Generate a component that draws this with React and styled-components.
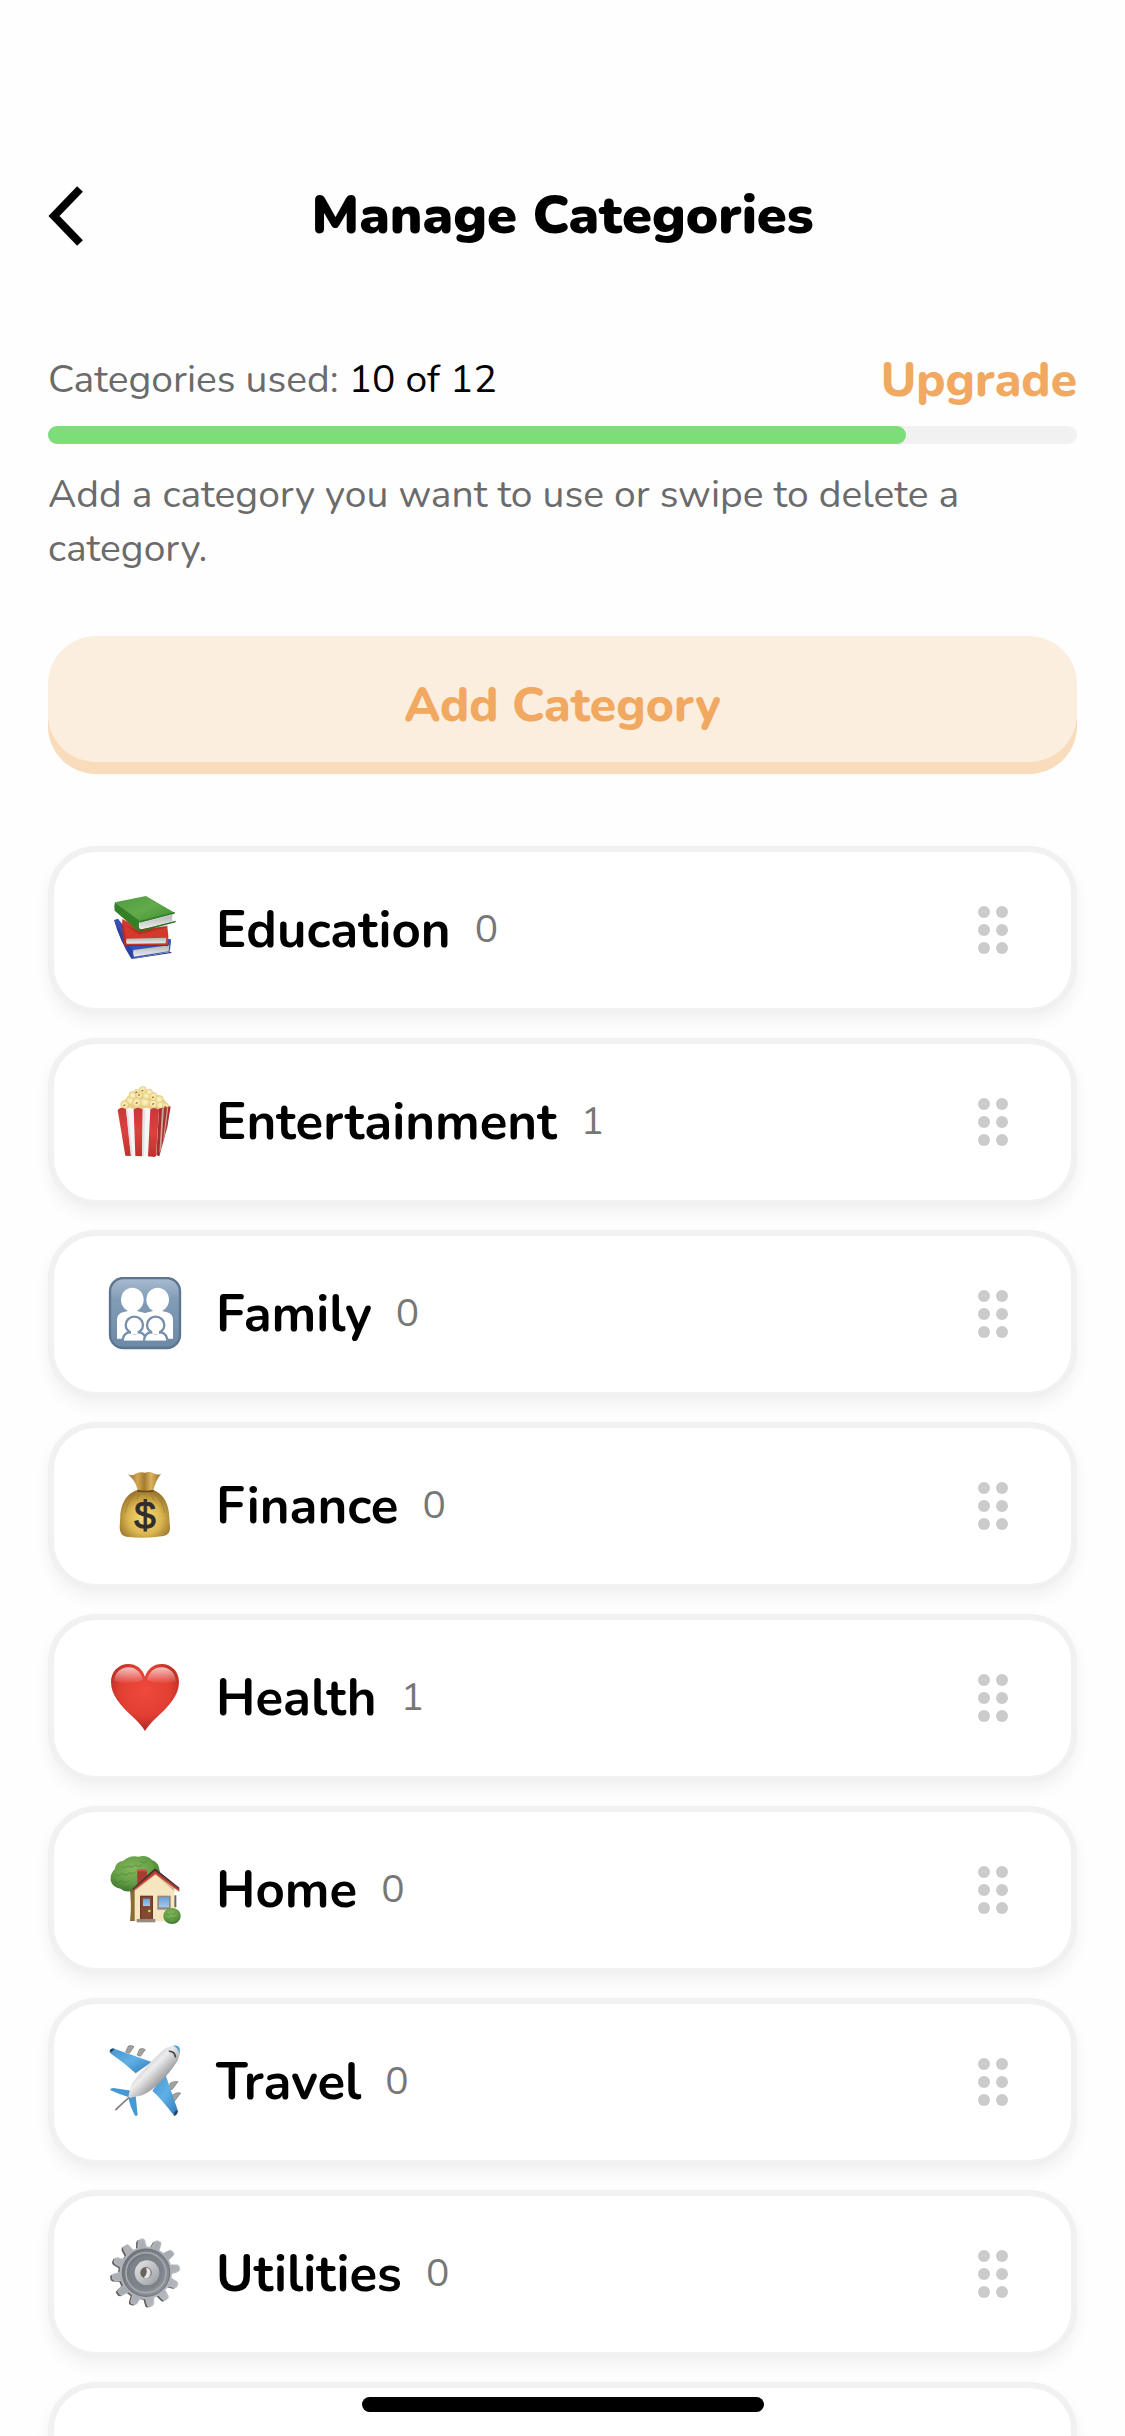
import React from "react";
import styled, { createGlobalStyle } from "styled-components";

const GlobalStyle = createGlobalStyle`
  *, *::before, *::after { box-sizing: border-box; }
  body { margin: 0; background: #fefefe; }
  body, button { font-family: Nunito, Lato, "Open Sans", sans-serif; color: #000; }
`;

const Screen = styled.div`
  position: relative;
  display: flex;
  flex-direction: column;
  height: 100vh;
  padding-top: 180px;
  background: #fefefe;
  overflow: hidden;
`;

const Header = styled.header`
  display: grid;
  grid-template-columns: 60px 1fr 60px;
  align-items: center;
  flex-shrink: 0;
  padding: 0 48px;
`;

const BackButton = styled.button`
  display: flex;
  padding: 0;
  border: 0;
  background: none;
`;

const Title = styled.h1`
  margin: 0;
  font-size: 54px;
  font-weight: 900;
  line-height: 70px;
  padding-bottom: 2px;
  text-align: center;
`;

const Content = styled.main`
  flex: 1;
  min-height: 0;
  padding: 98px 48px 0;
  overflow-y: auto;
  scrollbar-width: none;
`;

const UsageRow = styled.div`
  display: flex;
  align-items: center;
  justify-content: space-between;
  margin-bottom: 16px;
`;

const BodyText = styled.p`
  margin: 0;
  font-size: 39px;
  line-height: 54px;
  color: #6b6b6b;
`;

const UsageValue = styled.span`
  color: #000;
`;

const UpgradeLink = styled.a`
  font-size: 48px;
  font-weight: 800;
  line-height: 60px;
  color: #f1a961;
  text-decoration: none;
`;

const Track = styled.div`
  height: 18px;
  margin-bottom: 24px;
  border-radius: 9px;
  background: #f1f1f1;
`;

const Fill = styled.div`
  height: 100%;
  border-radius: 9px;
  background: #7cde79;
`;

const AddButton = styled.button`
  display: block;
  width: 100%;
  height: 138px;
  margin: 60px 0 72px;
  padding: 0;
  border: 0;
  border-radius: 48px;
  background: #fceedf;
  box-shadow: inset 0 -12px 0 #f9dcbc;
  font-size: 48px;
  font-weight: 800;
  line-height: 60px;
  color: #f1a961;
`;

const CategoryList = styled.ul`
  display: flex;
  flex-direction: column;
  gap: 24px;
  margin: 0;
  padding: 0;
  list-style: none;
`;

const Card = styled.li`
  display: flex;
  align-items: center;
  height: 168px;
  padding: 0 63px 0 54px;
  border: 6px solid #f1f1f1;
  border-radius: 48px;
  background: #fff;
  box-shadow: 0 8px 16px rgba(0, 0, 0, 0.05);
`;

const Emoji = styled.svg`
  flex-shrink: 0;
  width: 74px;
  height: 74px;
  margin-right: 34px;
`;

const Name = styled.span`
  font-size: 51px;
  font-weight: 700;
  line-height: 72px;
`;

const Count = styled.span`
  margin-left: 24px;
  font-size: 39px;
  line-height: 54px;
  color: #777;
`;

const Handle = styled.button`
  display: grid;
  grid-template-columns: repeat(2, 12px);
  gap: 6px;
  margin-left: auto;
  padding: 0;
  border: 0;
  background: none;
  cursor: grab;
`;

const Dot = styled.span`
  height: 12px;
  border-radius: 50%;
  background: #cbcbcb;
`;

const HomeIndicator = styled.div`
  position: absolute;
  bottom: 24px;
  left: 50%;
  width: 402px;
  height: 15px;
  border-radius: 8px;
  background: #000;
  transform: translateX(-50%);
`;

function Books() {
  return (
    <Emoji viewBox="54 69 222 222" aria-hidden="true">
      <defs>
        <linearGradient id="bk-green" x1="0" y1="0" x2="1" y2="1">
          <stop offset="0" stopColor="#4f9a3b" />
          <stop offset=".5" stopColor="#62ab4c" />
          <stop offset="1" stopColor="#3d8a2c" />
        </linearGradient>
        <linearGradient id="bk-page" x1="0" y1="0" x2="0" y2="1">
          <stop offset="0" stopColor="#b5b5b8" />
          <stop offset="1" stopColor="#ececee" />
        </linearGradient>
      </defs>
      <path d="M72 150l12-4 50 64 108-3 1 8-4 30-113 21z" fill="#3650b4" />
      <path d="M130 240l108-14-2 18-104 16q-5-10-2-20z" fill="url(#bk-page)" />
      <path d="M72 150l54 90 2 26h-4q-34-52-52-116z" fill="#2c41a0" />
      <path d="M126 266l118-21v4l-117 18z" fill="#27377f" />
      <path d="M97 147l55 30 80-8 3 30-1 28-126 1q-7-38-11-81z" fill="#d43a2c" />
      <path d="M110 206l119-3-2 17-117 1q-4-8 0-15z" fill="url(#bk-page)" />
      <path d="M97 147l10 55q-3 14 4 24l-7 2q-10-40-7-81z" fill="#b52b23" />
      <path d="M108 224h126v4H110z" fill="#a3221c" />
      <path d="M103 164l46 20 83-18v6l-84 22z" fill="#7f2119" opacity=".35" />
      <path d="M75 97l93-19 86 50-104 28z" fill="url(#bk-green)" />
      <path d="M150 159l98-25q-4 10 0 19l-96 25q-8-9-2-19z" fill="url(#bk-page)" />
      <path d="M75 97l75 57q-7 12 0 26l-5 4-71-62q-3-13 1-25z" fill="#347f28" />
      <path d="M148 180l109-28v5l-109 29z" fill="#2d7323" />
      <path d="M148 153l106-27v5l-104 27z" fill="#347f28" />
    </Emoji>
  );
}

function Popcorn() {
  const kernels = [
    [104, 134, 13], [122, 120, 14], [141, 127, 15], [165, 126, 15], [190, 130, 14], [212, 134, 13], [226, 138, 10],
    [128, 106, 12], [148, 103, 13], [170, 106, 13], [190, 110, 13], [208, 118, 12],
    [158, 90, 11], [178, 96, 10], [140, 95, 8],
  ];
  return (
    <Emoji viewBox="54 75 222 222" aria-hidden="true">
      <defs>
        <radialGradient id="pop">
          <stop offset="0" stopColor="#fff4c8" />
          <stop offset=".7" stopColor="#f3e2a0" />
          <stop offset="1" stopColor="#e0c67c" />
        </radialGradient>
        <linearGradient id="pop-red" x1="0" y1="0" x2="0" y2="1">
          <stop offset="0" stopColor="#c93739" />
          <stop offset=".5" stopColor="#dc413d" />
          <stop offset="1" stopColor="#c2302f" />
        </linearGradient>
      </defs>
      <path d="M92 144q10-38 66-58 60 16 82 56l-8 10H98z" fill="#e8d08a" />
      {kernels.map(([x, y, r], i) => (
        <g key={`${x}-${y}`}>
          <circle cx={x} cy={y} r={r} fill="url(#pop)" />
          {i % 2 === 0 && <path d={`M${x - 3} ${y + 4}q2-4 5-2`} stroke="#a5673a" strokeWidth="4" fill="none" />}
        </g>
      ))}
      <path d="M206 146l36-7-10 62-24 88-12-4z" fill="#a82d2e" />
      <path d="M216 146l6-2-8 120-6 16zM231 142l4-1-10 80-7 30z" fill="#c9a593" />
      <path d="M83 150q12-12 25-2 12-9 24 0 12-9 25 0 12-9 24 0 13-8 26 1l-8 138-6 4-86-4z" fill="#f6f6f6" />
      <path d="M83 150q12-12 25-2l15 140-17-1z" fill="url(#pop-red)" />
      <path d="M131 148q13-9 27 0l-2 141-20-1z" fill="url(#pop-red)" />
      <path d="M181 148q13-8 26 1l-9 138-4 4-20-2z" fill="url(#pop-red)" />
      <path d="M108 150l6 2 14 136h-6zM158 150h8l-4 139h-6z" fill="#dadade" opacity=".7" />
    </Emoji>
  );
}

function Family() {
  return (
    <Emoji viewBox="54 81 222 222" aria-hidden="true">
      <defs>
        <linearGradient id="fam" x1="0" y1="0" x2="0" y2="1">
          <stop offset="0" stopColor="#a9bdd0" />
          <stop offset=".3" stopColor="#829cb6" />
          <stop offset="1" stopColor="#6c89a7" />
        </linearGradient>
      </defs>
      <rect x="60" y="84" width="210" height="210" rx="40" fill="url(#fam)" stroke="#5c7692" strokeWidth="7" />
      <g fill="#fff">
        <ellipse cx="127" cy="149" rx="34" ry="36" />
        <ellipse cx="203" cy="149" rx="34" ry="36" />
        <path d="M81 266v-56q0-20 20-24 16-2 18-8h18q2 6 16 8l12 3 12-3q14-2 16-8h18q2 6 18 8 20 4 20 24v56z" />
      </g>
      <g fill="#fff" stroke="#7590ac" strokeWidth="7">
        <path d="M98 276q0-26 20-29 5-1 5-5h20q0 4 5 5 20 3 20 29z" />
        <path d="M162 276q0-26 20-29 5-1 5-5h20q0 4 5 5 20 3 20 29z" />
        <ellipse cx="133" cy="225" rx="26" ry="25" />
        <ellipse cx="197" cy="225" rx="26" ry="25" />
      </g>
      <path d="M123 236h20v16h-20zM187 236h20v16h-20z" fill="#fff" />
      <path d="M84 272h162v9H84z" fill="#6f8ba8" />
    </Emoji>
  );
}

function MoneyBag() {
  return (
    <Emoji viewBox="54 72 222 222" aria-hidden="true">
      <defs>
        <radialGradient id="bag" cx=".5" cy=".6" r=".6">
          <stop offset="0" stopColor="#f6df7c" />
          <stop offset=".55" stopColor="#dcb650" />
          <stop offset="1" stopColor="#93702a" />
        </radialGradient>
        <linearGradient id="bag-top" x1="0" y1="0" x2="1" y2="0">
          <stop offset="0" stopColor="#8f6a27" />
          <stop offset=".3" stopColor="#d3a750" />
          <stop offset=".5" stopColor="#a37b31" />
          <stop offset=".7" stopColor="#dcb45f" />
          <stop offset="1" stopColor="#8f6a27" />
        </linearGradient>
      </defs>
      <path d="M144 134q-46 14-53 72-1 26-2 42 1 24 20 27 56 7 112-2 20-3 19-26l-3-42q-6-55-49-71z" fill="url(#bag)" />
      <path d="M113 88q13 7 23-2 17-7 29-3 13-5 25 2 12 6 23 2-14 16-23 48-23 6-47 0-7-30-30-47z" fill="url(#bag-top)" />
      <path d="M142 134q24 6 49 0l-1 6q-24 4-47 0z" fill="#6b481b" />
      <path d="M140 144q-28 18-34 60M190 144q28 18 34 60M152 142q-10 10-12 22M178 142q10 10 12 22" stroke="#a57d2e" strokeWidth="4" fill="none" opacity=".6" />
      <text x="165" y="253" textAnchor="middle" fontFamily="Liberation Sans, sans-serif" fontSize="116" fill="#322d2c" stroke="#322d2c" strokeWidth="3">$</text>
    </Emoji>
  );
}

function Heart() {
  return (
    <Emoji viewBox="54 63 222 222" aria-hidden="true">
      <defs>
        <radialGradient id="hrt" cx=".5" cy=".4" r=".62">
          <stop offset="0" stopColor="#f0493d" />
          <stop offset=".6" stopColor="#e23f33" />
          <stop offset="1" stopColor="#a9281f" />
        </radialGradient>
        <linearGradient id="hrt-shine" x1="0" y1="0" x2="0" y2="1">
          <stop offset="0" stopColor="#fff" stopOpacity=".7" />
          <stop offset="1" stopColor="#fff" stopOpacity="0" />
        </linearGradient>
      </defs>
      <path d="M165 273Q154 254 128 230C90 196 63 164 63 126c0-32 24-54 52-54 24 0 42 14 50 38 8-24 26-38 50-38 28 0 52 22 52 54 0 38-27 70-65 104q-26 24-37 43z" fill="url(#hrt)" />
      <path d="M73 124c0-26 20-42 42-42 22 0 38 14 44 38q-44 20-86 4zM257 124c0-26-20-42-42-42-22 0-38 14-44 38q44 20 86 4z" fill="url(#hrt-shine)" />
    </Emoji>
  );
}

function Home() {
  return (
    <Emoji viewBox="54 69 222 222" aria-hidden="true">
      <defs>
        <radialGradient id="tree" cx=".45" cy=".35" r=".65">
          <stop offset="0" stopColor="#84b85c" />
          <stop offset=".6" stopColor="#659f45" />
          <stop offset="1" stopColor="#3f7731" />
        </radialGradient>
        <linearGradient id="glass" x1="0" y1="0" x2="0" y2="1">
          <stop offset="0" stopColor="#69a0d7" />
          <stop offset="1" stopColor="#a4caeb" />
        </linearGradient>
      </defs>
      <path d="M118 165h22v108h-20q6-50-2-108z" fill="#8a6b35" />
      <path d="M62 152q-2-22 12-34 2-22 26-26 20-18 46-12 24-6 40 10 20 8 22 28 8 20-8 34l-46 28q-12 10-34 4-18 2-28-8-24-4-30-24z" fill="url(#tree)" />
      <g stroke="#427a33" strokeWidth="3" fill="none" opacity=".55">
        <path d="M76 132q10 10 22-2 10 10 20-2 10 8 18-2M94 110q10 8 20-2 12 8 22-2 12 8 20-2M72 154q12 8 22-2 12 10 22 0M96 172q12 6 22-4M150 94q10 8 20 0" />
      </g>
      <path d="M142 122q14-6 29 0v26l-29 20z" fill="#a83b30" />
      <path d="M140 120q16-6 32 0v5q-16-4-32 0z" fill="#c7584a" />
      <path d="M134 176l63-50 56 50v98H134z" fill="#f6e6bf" />
      <path d="M134 184l63-50 56 50v-10l-56-46-63 48z" fill="#cfb98c" />
      <path d="M127 178l68-61 73 58v10l-72-53-69 53z" fill="#c33d36" />
      <path d="M127 177l68-62 73 58-1 4-72-55-67 58z" fill="#3c3335" />
      <path d="M150 197h39v70h-39z" fill="#6d3a29" />
      <path d="M154 201h31v66h-31z" fill="#834832" />
      <path d="M159 206h21v22h-21z" fill="url(#glass)" />
      <circle cx="178" cy="243" r="4" fill="#ecc75a" />
      <path d="M140 267h56v10h-56z" fill="#9a8982" />
      <path d="M202 197h40v42h-40z" fill="#94857e" />
      <path d="M207 201h30v31h-30z" fill="url(#glass)" />
      <path d="M253 196h6v36h-6z" fill="#77635a" />
      <ellipse cx="246" cy="258" rx="26" ry="24" fill="url(#tree)" />
      <path d="M230 252q8 6 14-2 8 6 14-2M232 266q8 6 14-2 8 6 14-2" stroke="#427a33" strokeWidth="3" fill="none" opacity=".5" />
    </Emoji>
  );
}

function Plane() {
  return (
    <Emoji viewBox="54 75 222 222" aria-hidden="true">
      <defs>
        <linearGradient id="body" x1="0" y1="0" x2="1" y2="1">
          <stop offset=".3" stopColor="#bcbcc0" />
          <stop offset=".46" stopColor="#ededee" />
          <stop offset=".68" stopColor="#858589" />
        </linearGradient>
        <linearGradient id="wing" x1="0" y1="0" x2="1" y2="1">
          <stop offset="0" stopColor="#4795cf" />
          <stop offset=".5" stopColor="#5fb0e6" />
          <stop offset="1" stopColor="#3178b4" />
        </linearGradient>
      </defs>
      <g fill="#a5a29d" stroke="#77736f" strokeWidth="2">
        <path d="M107 96l8-18q9-4 17 2l-14 20zM141 105l8-18q9-4 17 2l-15 20zM240 190q14-8 24-5l-18 24-8-2zM248 224q14-8 24-5l-18 24-8-2z" />
      </g>
      <path d="M59 94q2-10 14-8l112 40-48 34q-34-32-78-62z" fill="url(#wing)" />
      <path d="M59 94q2-10 14-8l-8 10z" fill="#263e57" />
      <path d="M225 160l38 110q1 14-10 18-36-48-66-76z" fill="url(#wing)" />
      <path d="M263 270q1 14-10 18v-12z" fill="#263e57" />
      <path d="M60 210q2-6 10-6l55 8-8 20q-26-8-57-22z" fill="#4698d4" />
      <path d="M143 284q-3 5-8 3-14-24-20-52l22-8z" fill="#4698d4" />
      <path d="M75 266q20-22 40-36l8-34q10-22 96-106 26-18 46-12 12 12-2 44-50 76-106 104l-40 8q-20 20-38 38-6 0-4-6z" fill="url(#body)" />
      <path d="M248 77q12-2 18 3 6 8 2 20-4-18-20-23z" fill="#46a3e0" />
      <path d="M236 91q24 2 23 24l-6-5q0-12-16-14z" fill="#4a4a4e" />
      <path d="M76 270l42-38" stroke="#78787c" strokeWidth="4" />
    </Emoji>
  );
}

function gearOutline(cx, cy) {
  const point = (deg, r) => {
    const a = (deg * Math.PI) / 180;
    return `${(cx + r * Math.cos(a)).toFixed(1)} ${(cy + r * Math.sin(a)).toFixed(1)}`;
  };
  const teeth = Array.from({ length: 12 }, (_, i) => {
    const a = -98 + i * 30;
    return [point(a - 10, 78), point(a - 6, 97), point(a - 3, 102), point(a + 4, 102), point(a + 6, 97), point(a + 9, 78)].join("L");
  });
  return `M${teeth.join("L")}Z`;
}

function Gear() {
  return (
    <Emoji viewBox="54 66 222 222" aria-hidden="true">
      <defs>
        <linearGradient id="steel" x1="0" y1="0" x2="1" y2="1">
          <stop offset="0" stopColor="#b4b8bd" />
          <stop offset=".5" stopColor="#a6abb1" />
          <stop offset="1" stopColor="#bbbec3" />
        </linearGradient>
        <linearGradient id="dish" x1="0" y1="0" x2="1" y2="1">
          <stop offset="0" stopColor="#6b7077" />
          <stop offset="1" stopColor="#92979d" />
        </linearGradient>
        <linearGradient id="hub" x1="0" y1="0" x2="1" y2="1">
          <stop offset="0" stopColor="#e4e6e9" />
          <stop offset="1" stopColor="#9a9da2" />
        </linearGradient>
      </defs>
      <path d={gearOutline(162, 176)} fill="#64625f" />
      <path d={gearOutline(168, 173)} fill="url(#steel)" stroke="#c9ccd0" strokeWidth="2" />
      <circle cx="168" cy="173" r="71" fill="url(#dish)" stroke="#6c7178" strokeWidth="3" />
      <circle cx="168" cy="173" r="60" fill="none" stroke="#a4a9af" strokeWidth="5" />
      <circle cx="168" cy="173" r="50" fill="#7d8289" />
      <circle cx="171" cy="173" r="37" fill="url(#hub)" />
      <circle cx="168" cy="173" r="17" fill="#6b625c" />
      <path d="M168 158q14 2 14 15 0 12-12 17-5 0-9-3 14-10 7-29z" fill="#e6e7e9" />
    </Emoji>
  );
}

const categories = [
  { name: "Education", count: 0, Icon: Books },
  { name: "Entertainment", count: 1, Icon: Popcorn },
  { name: "Family", count: 0, Icon: Family },
  { name: "Finance", count: 0, Icon: MoneyBag },
  { name: "Health", count: 1, Icon: Heart },
  { name: "Home", count: 0, Icon: Home },
  { name: "Travel", count: 0, Icon: Plane },
  { name: "Utilities", count: 0, Icon: Gear },
];

const USED = 10;
const LIMIT = 12;

function CategoryCard({ name, count, Icon }) {
  return (
    <Card>
      <Icon />
      <Name>{name}</Name>
      <Count>{count}</Count>
      <Handle type="button" aria-label={`Reorder ${name}`}>
        {Array.from({ length: 6 }, (_, i) => (
          <Dot key={i} />
        ))}
      </Handle>
    </Card>
  );
}

export default function App() {
  return (
    <Screen>
      <GlobalStyle />
      <Header>
        <BackButton type="button" aria-label="Back">
          <svg width="36" height="60" viewBox="0 0 36 60" fill="none" stroke="#000" strokeWidth="8">
            <path d="M32 3L6 30l26 27" />
          </svg>
        </BackButton>
        <Title>Manage Categories</Title>
      </Header>
      <Content>
        <UsageRow>
          <BodyText>
            Categories used: <UsageValue>{USED} of {LIMIT}</UsageValue>
          </BodyText>
          <UpgradeLink href="#upgrade">Upgrade</UpgradeLink>
        </UsageRow>
        <Track role="progressbar" aria-label="Categories used" aria-valuenow={USED} aria-valuemax={LIMIT}>
          <Fill style={{ width: `${(USED / LIMIT) * 100}%` }} />
        </Track>
        <BodyText>Add a category you want to use or swipe to delete a category.</BodyText>
        <AddButton type="button">Add Category</AddButton>
        <CategoryList>
          {categories.map((category) => (
            <CategoryCard key={category.name} {...category} />
          ))}
          <Card />
        </CategoryList>
      </Content>
      <HomeIndicator />
    </Screen>
  );
}
